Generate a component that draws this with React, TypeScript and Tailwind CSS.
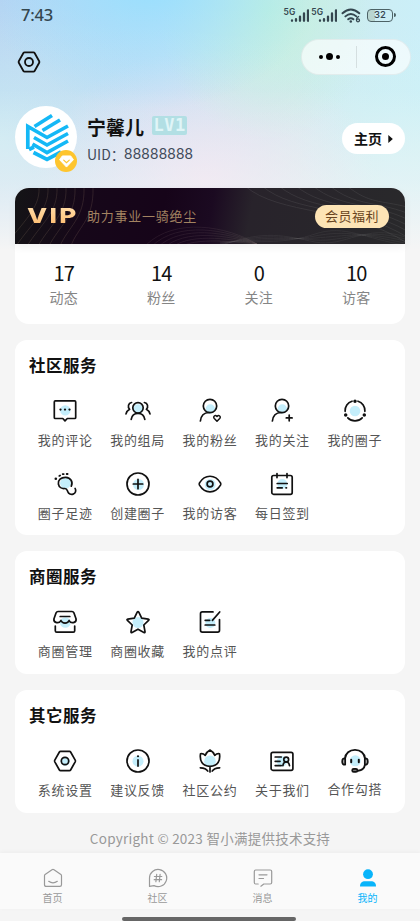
import type { ReactNode } from "react";

const Icon = ({ children, tint }: { children: ReactNode; tint?: [number, number, number] }) => (
  <svg
    viewBox="0 0 28 28"
    className="block h-7 w-7 overflow-visible"
    fill="none"
    stroke="#111"
    strokeWidth="1.7"
    strokeLinecap="round"
    strokeLinejoin="round"
  >
    {tint && <circle cx={tint[0]} cy={tint[1]} r={tint[2]} fill="#c4eefb" stroke="none" />}
    {children}
  </svg>
);

const HEX = "M9.6 4.3h8.8q.8 0 1.2.7l4.6 8.2q.4.8 0 1.6L19.600 23q-.4.7-1.200.7H9.600q-.8 0-1.200-.7l-4.600-8.200q-.4-.8 0-1.600L8.400 5q.4-.7 1.200-.7z";

const CommentIcon = () => (
  <Icon tint={[14.3, 13.4, 5.2]}>
    <path d="M4.300 3.900h19.400q1 0 1 1v15.600q0 1-1 1h-7.400L14 23.800l-2.200-2.300H4.300q-1 0-1-1V4.900q0-1 1-1z" />
    <path d="M9.500 12.600h.01M14 12.600h.01M18.500 12.600h.01" strokeWidth="2.300" />
  </Icon>
);
const GroupIcon = () => (
  <Icon tint={[14.2, 12.3, 5]}>
    <circle cx="14" cy="10.800" r="5.200" />
    <path d="M7.200 22.300c.6-3.600 3.200-6 6.800-6s6.200 2.400 6.800 6M7.600 5.500c-3.400.6-4.200 4.400-2 6.800-1.600.9-3.200 2.500-3.600 4.600M20.400 5.500c3.400.6 4.200 4.400 2 6.800 1.600.9 3.200 2.500 3.600 4.600" />
  </Icon>
);
const FansIcon = () => (
  <Icon tint={[14.300, 12, 4.700]}>
    <circle cx="14" cy="9" r="6.700" />
    <path d="M4.400 24c.5-4.800 3.600-8.300 8.600-8.500" />
    <path d="M21 24.200l-2.700-2.700c-1.700-1.900.9-4.100 2.700-2 1.800-2.100 4.400.1 2.700 2z" strokeWidth="1.500" />
  </Icon>
);
const FollowIcon = () => (
  <Icon tint={[14.300, 12, 4.700]}>
    <circle cx="14" cy="9" r="6.700" />
    <path d="M4.400 24c.5-4.800 3.600-8.300 8.600-8.500M18.300 20.900h5.800M21.200 18v5.800" />
  </Icon>
);
const CircleIcon = () => (
  <Icon tint={[14, 14, 5.300]}>
    <path d="M17 4.200a10 10 0 0 1 6.900 10.100M4.100 14.300A10 10 0 0 1 11 4.200M6.800 20.800a10 10 0 0 0 14.400 0" />
    <circle cx="14" cy="4.300" r=".9" fill="#111" />
    <circle cx="4.700" cy="18" r=".9" fill="#111" />
    <circle cx="23.300" cy="18" r=".9" fill="#111" />
  </Icon>
);
const FootIcon = () => (
  <Icon tint={[14.500, 13.300, 5.400]}>
    <path d="M20.300 16.200c2-4.200-.7-8.700-5.500-8.900-4.900-.2-8 3.100-7.400 6.700.6 3.300 3.600 4.900 6.300 4.500 2.200-.2 2.500 1.700 3.100 3.200.8 2.200 3.200 3.200 5.300 2.400 2.500-.9 3.300-3.600 2-5.700" />
    <path d="M4.800 8.800h.01" strokeWidth="2.600" />
    <path d="M8.300 5.900l.8-.5M11.700 4.200l1-.1M15.700 4h.9" strokeWidth="1.800" />
  </Icon>
);
const CreateIcon = () => (
  <Icon tint={[14.500, 14.500, 5.500]}>
    <circle cx="14" cy="14" r="11" />
    <path d="M9.300 14h9.400M14 9.300v9.400" />
  </Icon>
);
const EyeIcon = () => (
  <Icon tint={[14.200, 14.500, 5.500]}>
    <path d="M3.500 12.900C8.800 4 19.200 4 24.500 12.900q.6 1.100 0 2.200C19.200 24 8.800 24 3.500 15.100q-.6-1.100 0-2.200z" />
    <circle cx="14" cy="14" r="2.900" />
  </Icon>
);
const CalendarIcon = () => (
  <Icon tint={[14.300, 14, 5]}>
    <rect x="3.800" y="5.500" width="20.400" height="18.800" rx="1.800" />
    <path d="M9 3.600v4M19 3.600v4M9.200 13.500h10M9.200 17.800h5M18 17.800h.5" />
  </Icon>
);
const ShopIcon = () => (
  <Icon tint={[14.300, 14.500, 5.300]}>
    <path d="M7 3.500h14q1.300 0 1.900 1.300l2.200 6.200c.5 4.200-5.500 4.900-7 1.500-1.400 3.500-6.700 3.500-8.200 0-1.500 3.400-7.500 2.700-7-1.500l2.200-6.200Q5.700 3.500 7 3.500zM9.200 8.500h9.600M4.300 18v4.800q0 1.400 1.400 1.400h16.600q1.400 0 1.400-1.400V18" />
  </Icon>
);
const StarIcon = () => (
  <Icon tint={[14, 14.500, 5.500]}>
    <path d="M13.200 4.200q.8-1.300 1.600 0l2.900 6 6.500.9q1.400.3.400 1.300l-4.800 4.600 1.200 6.600q.2 1.300-1.100.8L14 21.200l-5.900 3.200q-1.300.5-1.100-.8L8.200 17l-4.800-4.600q-1-1 .4-1.300l6.500-.9z" />
  </Icon>
);
const ReviewIcon = () => (
  <Icon tint={[14.300, 15, 5]}>
    <path d="M17 3.900H6.300q-1.800 0-1.800 1.800v16.600q0 1.800 1.800 1.800h15.400q1.800 0 1.800-1.800V11.500M9.200 12.300h4.500M9.200 17h9.600M23.700 4l-7.300 8.400" />
  </Icon>
);
const SettingsIcon = () => (
  <Icon tint={[14.200, 14.200, 4.500]}>
    <path d={HEX} />
    <circle cx="14" cy="14" r="3.700" />
  </Icon>
);
const InfoIcon = () => (
  <Icon tint={[14, 14.200, 5.500]}>
    <circle cx="14" cy="14" r="11" />
    <path d="M14 12.900v6.200" strokeWidth="1.700" />
    <path d="M14 9.300h.01" strokeWidth="2.100" />
  </Icon>
);
const TulipIcon = () => (
  <Icon tint={[14, 14.200, 5.800]}>
    <path d="M4.500 6.800c1.900-.3 3.500.3 4.700 1.500 1-2.200 2.800-4.300 4.800-5.300 2 1 3.800 3.100 4.800 5.300 1.200-1.200 2.800-1.800 4.700-1.500 1 6.700-1.500 12.500-9.500 12.500S3.500 13.500 4.500 6.800zM14 19.300v5.600M4.300 20.800c3.700.1 6.200 1.100 7.500 3.300M23.700 20.800c-3.700.1-6.200 1.100-7.500 3.300" />
  </Icon>
);
const AboutIcon = () => (
  <Icon tint={[14, 14.200, 5.200]}>
    <rect x="3.100" y="5.300" width="21.800" height="18" rx="1.800" />
    <path d="M7.200 10h6M7.200 14.300h4.800M7.200 18.600h6" />
    <circle cx="18.200" cy="12.500" r="2.400" />
    <path d="M14.900 18.700c.3-2.400 1.500-3.700 3.300-3.700s3 1.300 3.300 3.700" />
  </Icon>
);
const ServiceIcon = () => (
  <Icon tint={[14.300, 13.800, 5.500]}>
    <path d="M4 11.500C4.400 6.200 8.500 2.900 14 2.900s9.600 3.300 10 8.600M24 17.700c-.6 3.500-3.400 5.700-7 6" strokeWidth="1.900" />
    <path d="M4.200 11.300v6.400q-3 .3-3-3.200t3-3.200zM23.800 11.300v6.400q3 .3 3-3.200t-3-3.200z" fill="#aaa" />
    <rect x="11.200" y="21.800" width="5.200" height="3.100" rx="1.500" fill="#777" />
    <path d="M10.200 12.700v2.500M17.800 12.700v2.500" strokeWidth="2" />
  </Icon>
);

type Item = { label: string; icon: ReactNode; raised?: boolean };

const community: Item[] = [
  { label: "我的评论", icon: <CommentIcon /> },
  { label: "我的组局", icon: <GroupIcon /> },
  { label: "我的粉丝", icon: <FansIcon /> },
  { label: "我的关注", icon: <FollowIcon /> },
  { label: "我的圈子", icon: <CircleIcon /> },
  { label: "圈子足迹", icon: <FootIcon /> },
  { label: "创建圈子", icon: <CreateIcon /> },
  { label: "我的访客", icon: <EyeIcon /> },
  { label: "每日签到", icon: <CalendarIcon /> },
];
const business: Item[] = [
  { label: "商圈管理", icon: <ShopIcon /> },
  { label: "商圈收藏", icon: <StarIcon /> },
  { label: "我的点评", icon: <ReviewIcon /> },
];
const others: Item[] = [
  { label: "系统设置", icon: <SettingsIcon /> },
  { label: "建议反馈", icon: <InfoIcon /> },
  { label: "社区公约", icon: <TulipIcon /> },
  { label: "关于我们", icon: <AboutIcon /> },
  { label: "合作勾搭", icon: <ServiceIcon />, raised: true },
];

const Section = ({ title, items, className }: { title: string; items: Item[]; className: string }) => (
  <section className={`mx-[15px] rounded-[12px] bg-white px-[14px] pt-[14px] ${className}`}>
    <h2 className="text-[16.500px] leading-[22px] font-bold tracking-[0.500px] text-[#111]">{title}</h2>
    <div className="mt-[21px] grid grid-cols-5">
      {items.map((it) => (
        <div key={it.label} className="flex h-[73px] flex-col items-center">
          {it.icon}
          <span className={`text-[13px] leading-5 tracking-[0.700px] whitespace-nowrap text-[#555] ${it.raised ? "mt-1" : "mt-[5px]"}`}>
            {it.label}
          </span>
        </div>
      ))}
    </div>
  </section>
);

const Signal = () => (
  <div className="flex items-end">
    <span className="-mr-[5px] self-start font-['Inter'] text-[8.500px] leading-[8px] font-semibold">5G</span>
    <svg viewBox="0 0 19 14" className="h-[14px] w-[19px]" stroke="currentColor" strokeWidth="2.300" strokeLinecap="round">
      <path d="M2 12.800v-.3M6 12.800v-1.600M10 12.800V8.600M14 12.800V5.500M18 12.800V2.300" />
    </svg>
  </div>
);

const StatusBar = () => (
  <div className="flex h-[30px] items-center justify-between pr-[24px] pl-[21px] text-[#34464f]">
    <span className="font-['Noto_Sans'] text-[16.500px] font-medium tracking-[-0.200px]">7:43</span>
    <div className="flex items-center">
      <Signal />
      <div className="w-[2px]" />
      <Signal />
      <svg viewBox="0 0 20 15" className="ml-[4px] h-[15px] w-[20px]" fill="none" stroke="currentColor" strokeWidth="1.900" strokeLinecap="round">
        <path d="M1.500 5.300q8.300-7.800 16.800 0M4.400 8.400q5.500-4.900 11 0M7.200 11.300q2.700-2.300 5.200 0" />
        <path d="M9.800 13.500h.01" strokeWidth="2.500" />
        <path d="M17.600 8.500q-2.200 1.400-2.200 3.200" strokeWidth="1.300" />
        <circle cx="17" cy="12.300" r="1.500" strokeWidth="1.300" />
      </svg>
      <div className="ml-[6px] flex h-[13px] w-[26px] items-center justify-center rounded-[4px] border-[1.500px] border-[#4d6266] bg-gradient-to-r from-[#b9d5d0] from-30% to-transparent to-30% font-['Inter'] text-[9.500px] leading-none font-medium">
        32
      </div>
      <div className="ml-px h-[4px] w-[2px] rounded-r bg-[#4d6266]" />
    </div>
  </div>
);

const NavBar = () => (
  <div className="mt-[8px] flex h-[37px] items-center justify-between pr-[9px] pl-[15px]">
    <svg viewBox="0 0 28 28" className="mt-[11px] h-7 w-7" fill="none" stroke="#111" strokeWidth="1.800" strokeLinejoin="round">
      <path d={HEX} />
      <circle cx="14" cy="14" r="4" />
    </svg>
    <div className="flex h-[36px] w-[110px] items-center rounded-full border border-black/5 bg-white/65">
      <div className="flex w-[54px] items-center justify-center gap-[3px]">
        <i className="h-[4px] w-[4px] rounded-full bg-black" />
        <i className="h-[7px] w-[7px] rounded-full bg-black" />
        <i className="h-[4px] w-[4px] rounded-full bg-black" />
      </div>
      <div className="h-[22px] w-px bg-black/10" />
      <div className="flex flex-1 justify-center pl-[3px]">
        <div className="flex h-[21px] w-[21px] items-center justify-center rounded-full border-[3px] border-black">
          <i className="h-[7px] w-[7px] rounded-full bg-black" />
        </div>
      </div>
    </div>
  </div>
);

const Profile = () => (
  <div className="mt-[31px] flex h-[64px] px-[15px]">
    <div className="relative h-[62px] w-[62px] rounded-full bg-white">
      <svg viewBox="0 0 62 62" className="h-full w-full" fill="none" stroke="#14b8f6" strokeWidth="3.700">
        <path d="M12.800 43V20.500L32 31.500 53 20" />
        <path d="M19 31.500L32 39 53 27.500" />
        <path d="M14 43.500l5-2.500M17.500 38L32 46.500 53 35" />
        <path d="M18.500 46.500L32 53.500 46 46" />
        <path d="M19.500 20.500L37 9.500" />
        <path d="M27.500 24.500L45 14" />
      </svg>
      <div className="absolute right-0 -bottom-[4px] flex h-[22px] w-[22px] items-center justify-center rounded-full bg-[#fec52e]">
        <svg viewBox="0 0 16 14" className="h-[13px] w-[15px]">
          <path d="M3.500 1h9l3 4L8 13 .5 5z" fill="#fff" stroke="#fff" strokeLinejoin="round" />
          <path d="M5 5.500l3 2.700 3-2.700" fill="none" stroke="#fec52e" strokeWidth="1.300" strokeLinecap="round" />
        </svg>
      </div>
    </div>
    <div className="ml-[10px] flex-1 pt-[8px]">
      <div className="flex items-center">
        <span className="text-[19px] leading-[26px] font-bold text-[#111]">宁馨儿</span>
        <span className="-mt-[3px] ml-[8px] flex h-[19px] w-[35px] items-center justify-center rounded-[2px] bg-[#b2dfe4] font-['DejaVu_Sans_Mono'] text-[17px] leading-none font-bold tracking-[0.500px] text-[#e0f5f7]">
          LV1
        </span>
      </div>
      <div className="mt-[4px] flex text-[14px] leading-[20px] text-[#414b5a]">
        <span className="w-[37px]">UID：</span>
        <span className="font-['Lato'] text-[14.500px] tracking-[0.250px]">88888888</span>
      </div>
    </div>
    <button className="mt-[17px] flex h-[31px] w-[63px] items-center justify-center rounded-full bg-white text-[14px] font-bold text-[#111]">
      主页
      <svg viewBox="0 0 5 8" className="ml-[6px] h-[8px] w-[5px]">
        <path d="M.3 0L4.800 4 .3 8z" fill="#111" />
      </svg>
    </button>
  </div>
);

const stats = [
  ["17", "动态"],
  ["14", "粉丝"],
  ["0", "关注"],
  ["10", "访客"],
];

const VipCard = () => (
  <div className="mx-[15px] mt-[18px] h-[136px] rounded-[14px] bg-white">
    <div className="relative h-[56px] overflow-hidden rounded-t-[14px] bg-[linear-gradient(100deg,#141416_0%,#160719_18%,#160419_38%,#1b0a21_50%,#28232b_60%,#29292b_100%)] shadow-[0_3px_8px_rgba(0,0,0,0.06)]">
      <svg viewBox="0 0 390 56" className="absolute inset-0 h-full w-full" fill="none" strokeWidth="0.600">
        {[0, 1, 2, 3, 4, 5, 6].map((i) => (
          <path
            key={i}
            d={`M${24 + i * 9} 0C${25 + i * 9} ${20 + i * 2} ${8 + i * 9} ${34 + i} ${-10 + i * 11} 58`}
            stroke="#a58d75"
            strokeOpacity="0.320"
          />
        ))}
        {[0, 1, 2, 3, 4, 5].map((i) => (
          <path
            key={i}
            d={`M${131 + i * 6} ${57 + i}C${160 + i * 3} ${29 + i * 4} 212 ${38 + i * 3} 242 56`}
            stroke="#a58d8d"
            strokeOpacity="0.220"
          />
        ))}
        {[0, 1, 2, 3, 4, 5, 6].map((i) => (
          <path
            key={i}
            d={`M${230 + i * 17} -2C${265 + i * 15} ${28 - i * 2} ${335 + i * 5} ${18 - i} 392 ${55 - i * 6}`}
            stroke="#999"
            strokeOpacity="0.240"
          />
        ))}
        {[0, 1, 2, 3, 4].map((i) => (
          <path
            key={i}
            d={`M205 ${58 - i}C250 ${41 + i * 3} 270 ${48 + i * 2} 300 ${54 - i * 2}S350 ${35 + i * 4} 390 ${49 + i * 2}`}
            stroke="#999"
            strokeOpacity="0.180"
          />
        ))}
      </svg>
      <div className="relative flex h-full items-center pr-[16px] pl-[12px]">
        <div className="w-[60px]">
          <span className="inline-block origin-left scale-x-[1.280] bg-gradient-to-b from-[#ffe0ae] to-[#ffb968] bg-clip-text font-['Inter'] text-[20.500px] leading-[24px] font-extrabold tracking-[1.800px] text-transparent">
            VIP
          </span>
        </div>
        <span className="flex-1 text-[13px] tracking-[0.750px] text-[#a38361]">助力事业一骑绝尘</span>
        <span className="flex h-[23px] w-[74px] items-center justify-center rounded-full bg-[#fde4b5] text-[13px] tracking-[0.500px] text-[#694421]">
          会员福利
        </span>
      </div>
    </div>
    <div className="grid grid-cols-4 pt-[16px] text-center">
      {stats.map(([n, l]) => (
        <div key={l}>
          <div className="text-[20px] leading-[25px] tracking-[-0.900px] text-[#111]">{n}</div>
          <div className="text-[14px] leading-[24px] tracking-[0.300px] text-[#858585]">{l}</div>
        </div>
      ))}
    </div>
  </div>
);

const TabIcon = ({ children }: { children: ReactNode }) => (
  <svg viewBox="0 0 20 20" className="h-5 w-5" fill="none" stroke="#999" strokeWidth="1.200" strokeLinecap="round" strokeLinejoin="round">
    {children}
  </svg>
);

const tabs = [
  {
    label: "首页",
    icon: (
      <TabIcon>
        <path d="M1.500 7.700q0-.8.6-1.200L9 1.800q1-.7 2 0l6.900 4.700q.6.4.6 1.200v9q0 1.700-1.700 1.700H3.200q-1.700 0-1.700-1.700zM5.700 13.300q4.300 3.200 8.600 0" />
      </TabIcon>
    ),
  },
  {
    label: "社区",
    icon: (
      <TabIcon>
        <path d="M1.500 18.400V10a8.600 8.600 0 1 1 4.500 7.600zM8.700 6.300l-.8 7.400M12.100 6.300l-.8 7.400M6.400 8.500h7.400M6.200 11.700h7.400" />
      </TabIcon>
    ),
  },
  {
    label: "消息",
    icon: (
      <TabIcon>
        <path d="M5.200 16H2.800Q1.300 16 1.300 14.500v-11Q1.300 2 2.800 2h14.400q1.500 0 1.500 1.500v11q0 1.500-1.500 1.500h-6.400l-2.900 2.200M6 6.800h8M6 10.500h4.500" />
      </TabIcon>
    ),
  },
  {
    label: "我的",
    active: true,
    icon: (
      <svg viewBox="0 0 20 20" className="h-5 w-5" fill="#08b4fa">
        <circle cx="10" cy="6.200" r="4.900" />
        <path d="M2 18.500c0-3.800 2-5.300 5-5.300h6c3 0 5 1.500 5 5.300z" />
      </svg>
    ),
  },
];

export default function App() {
  return (
    <div className="flex h-[921px] w-[420px] flex-col overflow-hidden bg-[#f5f5f5] bg-[linear-gradient(to_bottom,transparent_0px,rgba(245,245,245,0.050)_90px,rgba(245,245,245,0.500)_180px,#f5f5f5_250px),radial-gradient(ellipse_170px_130px_at_150px_-20px,#97dffe,transparent),radial-gradient(ellipse_110px_130px_at_268px_10px,#c2f1de,transparent),radial-gradient(ellipse_170px_130px_at_205px_180px,#ecdff0,transparent),radial-gradient(ellipse_170px_150px_at_0px_140px,#c6e8f2,transparent),radial-gradient(ellipse_150px_120px_at_420px_150px,#cdf1f5,transparent),linear-gradient(to_right,#b6d2f2_0%,#c4e0f5_38%,#cfeaee_70%,#cbeff8_100%)] bg-[length:420px_250px] bg-no-repeat font-['Noto_Sans_CJK_SC',sans-serif]">
      <StatusBar />
      <NavBar />
      <Profile />
      <VipCard />
      <Section title="社区服务" items={community} className="mt-[16px] h-[195px]" />
      <Section title="商圈服务" items={business} className="mt-[16px] h-[123px]" />
      <Section title="其它服务" items={others} className="mt-[16px] h-[123px]" />
      <footer className="flex h-[40px] items-center justify-center pt-[11px] text-[13.500px] tracking-[0.250px] text-[#999]">
        Copyright © 2023 智小满提供技术支持
      </footer>
      <nav className="grid h-[56px] grid-cols-4 bg-[#fafafa] pt-[15px] shadow-[0_-1px_4px_rgba(0,0,0,0.040)]">
        {tabs.map((t) => (
          <div key={t.label} className="flex flex-col items-center">
            {t.icon}
            <span className={`mt-[3px] text-[10px] leading-[14px] ${t.active ? "text-[#08b4fa]" : "text-[#999]"}`}>{t.label}</span>
          </div>
        ))}
      </nav>
      <div className="mt-[8px] mr-[124px] ml-[122px] h-[4px] rounded-full bg-[#666]" />
    </div>
  );
}
